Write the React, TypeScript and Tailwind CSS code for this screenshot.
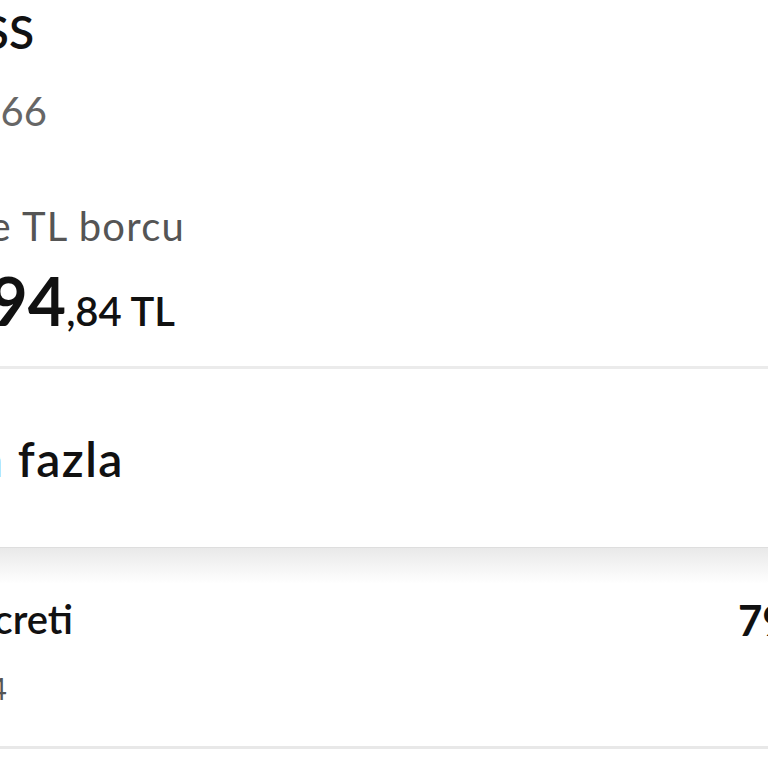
import React from "react";

// Text that runs off the left edge: the box ends where the visible text ends,
// and justify-end lets the rest overflow to the left.
const Clip = ({ end, className, children }: { end: string; className?: string; children: React.ReactNode }) => (
  <div className={`flex justify-end whitespace-nowrap ${end} ${className ?? ""}`}>{children}</div>
);

export default function App() {
  return (
    <div className="w-[768px] h-[768px] overflow-hidden bg-white font-['Lato','Noto_Sans',sans-serif] text-[#111]">
      {/* Card header */}
      <section className="flex flex-col">
        <Clip end="w-[34px]" className="mt-[9px] text-[46px] leading-[46px] font-semibold">
          <span>EXPRESS</span>
        </Clip>
        <Clip end="w-[47px]" className="mt-[36px] text-[40px] leading-[40px] text-[#666]">
          <span>**** 5566</span>
        </Clip>
        <Clip end="w-[185px]" className="mt-[75px] text-[40px] leading-[40px] tracking-[1.2px] text-[#555]">
          <span>Son ekstre TL borcu</span>
        </Clip>
        <Clip end="w-[175px]" className="mt-[22px] items-baseline">
          <span className="text-[66px] leading-[66px] font-bold">3.294</span>
          <span className="text-[40px] leading-[40px] font-semibold">,84 TL</span>
        </Clip>
        <div className="mt-[32px] h-[3px] bg-[#ebebeb]" />
      </section>

      {/* More link */}
      <section className="h-[179px] flex flex-col border-b border-[#dedede]">
        <Clip end="w-[124px]" className="mt-[66px] text-[48px] leading-[48px] tracking-[1.5px] font-semibold">
          <span>Daha fazla</span>
        </Clip>
      </section>

      {/* Fee row */}
      <section className="flex flex-col">
        <div className="h-[36px] bg-gradient-to-b from-[#e9e9e9] to-white" />
        <div className="flex items-start justify-between">
          <Clip end="w-[73px]" className="mt-[15px] text-[40px] leading-[40px] font-semibold">
            <span>Yıllık kart ücreti</span>
          </Clip>
          <div className="mt-[15px] w-[30px] overflow-hidden whitespace-nowrap text-[42px] leading-[42px] font-bold">
            79,00 TL
          </div>
        </div>
        <Clip end="w-[7px]" className="mt-[32px] text-[30px] leading-[30px] text-[#555]">
          <span>12.03.2024</span>
        </Clip>
        <div className="mt-[43px] h-[3px] bg-[#e8e8e8]" />
      </section>
    </div>
  );
}
